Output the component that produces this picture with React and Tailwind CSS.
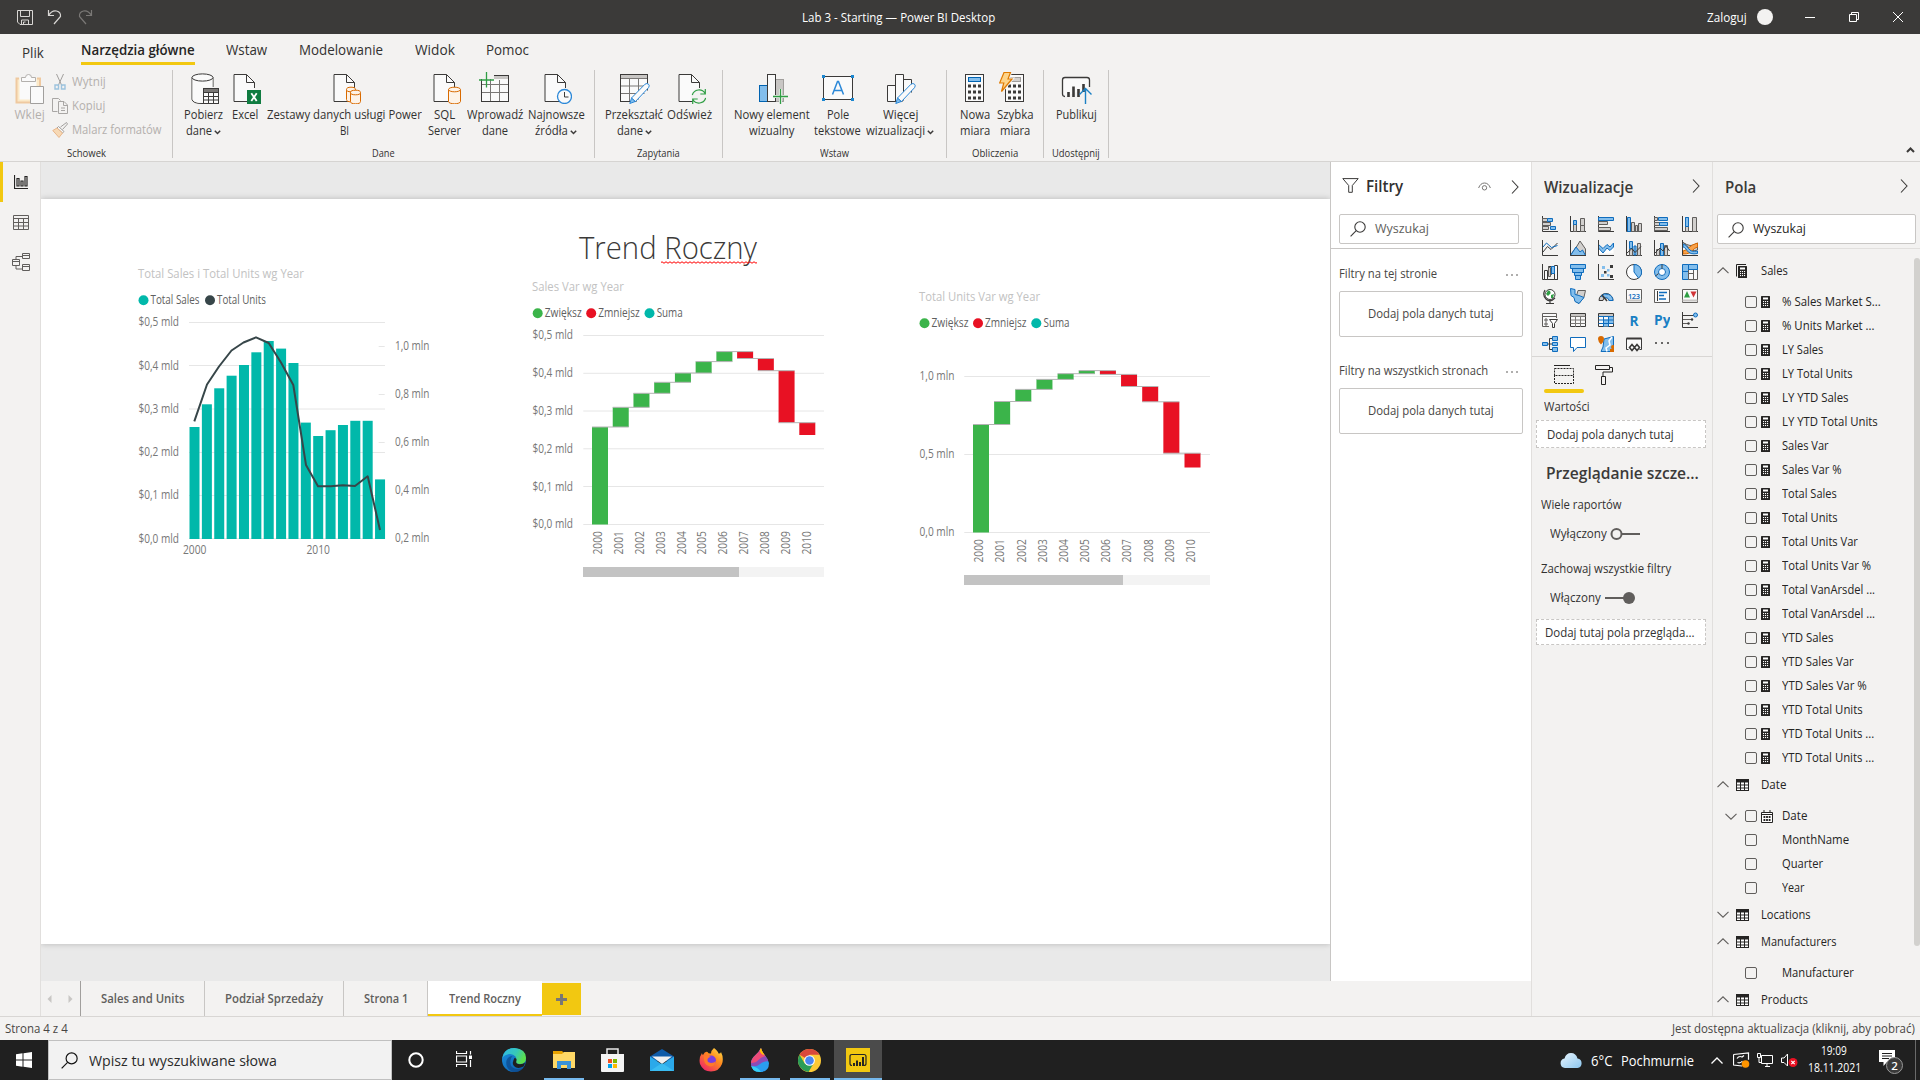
import React, { useLayoutEffect, useRef, useState } from "react";

const K = "#3b3a39";
const BLUE = "#0f6cbd";
const SKY = "#83beec";
const GRAY = "#c8c6c4";
const DG = "#797775";

/* Text condensed or widened so that it fills a given width. */
function T({ w, className = "", children }) {
  const ref = useRef(null);
  const [k, setK] = useState(1);
  useLayoutEffect(() => {
    setK(w / ref.current.offsetWidth);
  }, [w]);
  return (
    <span className={"inline-block whitespace-nowrap " + className} style={{ width: w + "px" }}>
      <span ref={ref} className="inline-block origin-left" style={{ transform: `scaleX(${k})` }}>
        {children}
      </span>
    </span>
  );
}

const Svg = ({ w = 16, h = w, vb, className = "", children }) => (
  <svg width={w} height={h} viewBox={vb || `0 0 ${w} ${h}`} fill="none" className={"block shrink-0 " + className}>
    {children}
  </svg>
);

/* ---------- shared small icons ---------- */
const Search = ({ s = 16, c = K }) => (
  <Svg w={s} vb="0 0 16 16">
    <circle cx="10" cy="6" r="5.2" stroke={c} strokeWidth="1.1" />
    <path d="M6.2 9.7 0.6 15.4" stroke={c} strokeWidth="1.1" />
  </Svg>
);
const ChevR = () => (
  <Svg w={8} h={16}>
    <path d="M1 1.5 7 8 1 14.5" stroke={K} strokeWidth="1.1" />
  </Svg>
);
const Chev = ({ up }) => (
  <Svg w={12} h={7}>
    <path d={up ? "M.5 6.2 6 .8 11.5 6.2" : "M.5 .8 6 6.2 11.5 .8"} stroke="#605e5c" strokeWidth="1.1" />
  </Svg>
);
const SmallDown = () => (
  <Svg w={7} h={5} className="ml-[2px] mt-[3px]">
    <path d="M.8 .8 3.5 3.5 6.2 .8" stroke={K} strokeWidth="1.5" />
  </Svg>
);

/* ---------- ribbon icons ---------- */
const Doc = () => (
  <>
    <path d="M5 2.5h13l7.5 7.5v19.500H5z" fill="#fafafa" />
    <path d="M20 29.500H5V2.500h12.500l8 8V16M17.500 2.500v8h8" stroke={K} />
  </>
);
const Cyl = ({ x, y, w, h, c = "#d86a00", f = "#fdf3e8" }) => {
  const r = w / 2;
  return (
    <g stroke={c} fill={f}>
      <path d={`M${x} ${y}v${h}a${r} 2.300 0 0 0 ${w} 0v${-h}`} />
      <ellipse cx={x + r} cy={y} rx={r} ry="2.300" />
    </g>
  );
};
const Pencil = () => (
  <g stroke="#2b88d8">
    <path d="M13.500 26 27 12.200q2-1.400 3.500 0t0 3.500L17.500 29.500z" fill="#fafafa" />
    <path d="M13.500 26.200 11.800 31.500 17.200 29.500z" fill={SKY} />
  </g>
);
const Keys = ({ x, y }) =>
  [0, 1, 2].map((r) => [0, 1, 2].map((c) => <rect key={r + "" + c} x={x + c * 5} y={y + r * 6} width="3" height="3" fill={K} />));

const ribbonIcons = {
  paste: (
    <>
      <path d="M5 6.500H2.500v24H26V6.500h-3" stroke="#efc9a0" strokeWidth="2" fill="#fbe9c8" />
      <path d="M5.500 6.500h17v21h-17z" fill="#fafafa" />
      <path d="M7.500 9.500v-4h4q0-3 3-3t3 3h4v4z" fill="#fafafa" stroke="#b3b0ad" />
      <path d="M16.500 14.500h13v17h-13z" fill="#fafafa" stroke="#a19f9d" />
    </>
  ),
  get: (
    <>
      <path d="M5 5.500v22q1 4 10 4h1M26 5.500V15" stroke={K} fill="none" />
      <path d="M5.500 6h20v9.500H16V31Q6 31 5.500 27z" fill="#fafafa" />
      <ellipse cx="15.500" cy="5.500" rx="10.500" ry="3.600" stroke={K} fill="#fafafa" />
      <rect x="16.500" y="16.500" width="15" height="15" fill="#fafafa" stroke={K} />
      <rect x="17" y="17" width="14" height="3" fill={DG} />
      <path d="M16.500 20.500h15M16.500 24.500h15M16.500 28h15M21.500 20v12M26.500 20v12" stroke={K} />
    </>
  ),
  excel: (
    <>
      <Doc />
      <rect x="18" y="18" width="14" height="14" fill="#107c41" />
      <path d="M22.300 21.200l5.400 7.800M27.700 21.200l-5.400 7.800" stroke="#fff" strokeWidth="1.800" />
    </>
  ),
  datasets: (
    <>
      <Doc />
      <Cyl x={17.500} y={17.500} w={9} h={10} />
      <Cyl x={21.500} y={20.500} w={10} h={9} />
    </>
  ),
  sql: (
    <>
      <Doc />
      <Cyl x={19.500} y={17.500} w={12} h={12} />
    </>
  ),
  enter: (
    <>
      <rect x="2.500" y="3.500" width="27" height="26" fill="#fafafa" stroke={K} />
      <rect x="12" y="4" width="17" height="3" fill={GRAY} />
      <path d="M3 12.500h26M3 20.500h26M11.500 4v25M20.500 8v21" stroke={DG} />
      <path d="M0 0h15v7H0z" fill="#f3f2f1" />
      <path d="M7.500 0v15.500M0 8h15" stroke="#2f9e44" strokeWidth="1.300" />
    </>
  ),
  recent: (
    <>
      <Doc />
      <circle cx="24.500" cy="24.500" r="7" fill="#fafafa" stroke="#2b88d8" strokeWidth="1.300" />
      <path d="M24.500 20v5h4" stroke={K} />
    </>
  ),
  transform: (
    <>
      <rect x="2.500" y="2.500" width="27" height="27" fill="#fafafa" stroke={K} />
      <rect x="3" y="3" width="26" height="3.500" fill={GRAY} />
      <path d="M3 6.500h26M3 14h26M3 21.500h26M11.500 7v22M20.500 7v22" stroke={DG} />
      <path d="M17 31 31 17v14z" fill="#f3f2f1" />
      <Pencil />
    </>
  ),
  refresh: (
    <>
      <Doc />
      <circle cx="25" cy="24.500" r="8" fill="#f3f2f1" />
      <path d="M18.300 23a7 7 0 0 1 12.800-1.500M31.700 26a7 7 0 0 1-12.800 1.500M31.300 17v5h-5M18.700 32v-5h5" stroke="#2f9e44" strokeWidth="1.200" />
    </>
  ),
  visual: (
    <>
      <rect x="3.500" y="13.500" width="8" height="16" fill={SKY} stroke="#0063b1" />
      <rect x="19.500" y="7.500" width="8" height="22" fill={GRAY} stroke="#a19f9d" />
      <rect x="11.500" y="2.500" width="8" height="27" fill="#fafafa" stroke={K} />
      <path d="M24.500 17v15M17 24.500h15" stroke="#f3f2f1" strokeWidth="3" />
      <path d="M24.500 17v15.500M17 24.500h15.500" stroke="#2f9e44" strokeWidth="1.300" />
    </>
  ),
  textbox: (
    <>
      <rect x="1.500" y="4.500" width="29" height="23" fill="#fafafa" stroke={K} />
      <path d="M10.500 22.500 15.500 9.500h1l5 13M12 18.500h8" stroke="#2b88d8" strokeWidth="1.500" />
      {[[0, 3], [29, 3], [0, 26], [29, 26]].map(([x, y]) => (
        <rect key={x + "-" + y} x={x} y={y} width="3" height="3" fill="#1a86d0" />
      ))}
    </>
  ),
  more: (
    <>
      <path d="M3.500 13.500h8v16h-8zM19.500 7.500h8v22h-8zM11.500 2.500h8v27h-8z" fill="#fafafa" stroke={K} />
      <path d="M17 31 31 17v14z" fill="#f3f2f1" />
      <Pencil />
    </>
  ),
  measure: (
    <>
      <rect x="6.500" y="2.500" width="18" height="27" fill="#fafafa" stroke={K} />
      <rect x="9.500" y="5.500" width="12" height="4" fill={SKY} stroke="#0063b1" />
      <Keys x={9} y={12.500} />
    </>
  ),
  quick: (
    <>
      <rect x="6.500" y="2.500" width="18" height="27" fill="#fafafa" stroke={K} />
      <rect x="11.500" y="5.500" width="10" height="4" fill="#d2d0ce" stroke="#a19f9d" />
      <Keys x={9} y={12.500} />
      <path d="M5 .5h6.500L9 7h4L2.500 19.500 4.800 11H.6z" fill="#fdd48a" stroke="#f3f2f1" strokeWidth="3" />
      <path d="M5 .5h6.500L9 7h4L2.500 19.500 4.800 11H.6z" fill="#fdd48a" stroke="#e07a00" strokeWidth="1.200" />
    </>
  ),
  publish: (
    <>
      <path d="M5 24.500q-2.500 0-2.500-2.500V8q0-2.500 2.500-2.500h22q2.500 0 2.500 2.500v7" stroke={K} strokeWidth="1.300" fill="#fafafa" />
      <path d="M8.500 20v5M13.500 14.500v10.500M18.500 17v8M23.500 12v8" stroke={K} strokeWidth="2.600" />
      <path d="M25.500 32V16M19.500 22.500l6-6 6 6" stroke="#1a80c4" strokeWidth="1.400" />
    </>
  ),
};

function RibbonButton({ icon, width, lines, drop }) {
  return (
    <div className={"flex flex-col items-center shrink-0 " + width}>
      <Svg w={32}>{ribbonIcons[icon]}</Svg>
      {lines.map(([t, w], i) => (
        <div key={t} className="flex h-4 items-center justify-center whitespace-nowrap leading-4 -mb-px mt-px first-of-type:mt-[3px]">
          <T w={w}>{t}</T>
          {drop && i === lines.length - 1 && <SmallDown />}
        </div>
      ))}
    </div>
  );
}

function Group({ label, lw, width, pad = "", children }) {
  return (
    <div className={"flex h-[88px] shrink-0 flex-col justify-between border-r border-[#c8c6c4] " + width}>
      <div className={"mt-[2px] flex " + pad}>{children}</div>
      <div className="flex h-[11px] items-center justify-center text-[10px] leading-none">
        <T w={lw}>{label}</T>
      </div>
    </div>
  );
}

function TitleBar() {
  return (
    <div className="flex h-[34px] shrink-0 items-center bg-[#3b3a39] text-[12px] text-white">
      <div className="flex w-[802px] items-center gap-[14px] pl-[17px]">
        <Svg w={16}>
          <path d="M.5 1.500h15v14H3L.5 13zM3.500 1.500v6h9v-6M4.500 15.500v-4.500h7v4.500M6.500 15v-2h2" stroke="#d8d6d4" />
        </Svg>
        <Svg w={15} h={16}>
          <path d="M1.500 1v5.500H7M1.500 6.500Q5 1 9.500 2T13.500 7.500L7 15" stroke="#d8d6d4" strokeWidth="1.200" />
        </Svg>
        <Svg w={15} h={16} className="ml-[2px]">
          <path d="M13.500 1v5.500H8M13.500 6.500Q10 1 5.500 2T1.500 7.500L8 15" stroke="#7a7876" strokeWidth="1.200" />
        </Svg>
      </div>
      <T w={193} className="mt-[2px]">Lab 3 - Starting — Power BI Desktop</T>
      <div className="ml-auto flex items-center">
        <T w={40} className="mt-px">Zaloguj</T>
        <span className="ml-[10px] h-4 w-4 rounded-full bg-[#f3f2f1]" />
        <Svg w={10} h={10} className="ml-8"><path d="M0 5.500h10" stroke="#fff" /></Svg>
        <Svg w={10} h={10} className="ml-[34px]"><path d="M.5 2.500h7v7h-7zM2.500 2.500V.5h7v7h-2" stroke="#fff" /></Svg>
        <Svg w={10} h={10} className="ml-[34px] mr-[17px]"><path d="M0 0 10 10M10 0 0 10" stroke="#fff" /></Svg>
      </div>
    </div>
  );
}

function Ribbon() {
  return (
    <div className="flex h-[128px] shrink-0 flex-col border-b border-[#d6d4d2] bg-[#f3f2f1] text-[12px] text-[#323130]">
      <div className="flex h-9 items-start pl-[22px] pt-[6px] text-[14px] leading-5">
        <T w={22} className="mt-[3px]">Plik</T>
        <div className="ml-[37px] h-[25px] border-b-[3px] border-[#f2c811] font-semibold text-[#252423]">
          <T w={114}>Narzędzia główne</T>
        </div>
        <T w={41} className="ml-[31px]">Wstaw</T>
        <T w={84} className="ml-8">Modelowanie</T>
        <T w={40} className="ml-8">Widok</T>
        <T w={43} className="ml-[31px]">Pomoc</T>
      </div>
      <div className="flex">
        <Group label="Schowek" lw={39} width="w-[173px]" pad="text-[#b3b0ad]">
          <div className="flex w-[52px] flex-col items-center pr-px pl-2">
            <Svg w={32}>{ribbonIcons.paste}</Svg>
            <div className="mt-[3px] leading-4"><T w={30}>Wklej</T></div>
          </div>
          <div className="mt-[-2px] flex flex-col">
            <div className="flex h-6 items-center gap-[4px]">
              <Svg w={16}>
                <path d="M4.500 0 10 12M11.500 0 6 12" stroke="#a19f9d" />
                <path d="M3 11h3.500v4H3zM9.500 11H13v4H9.500z" stroke="#9cc3de" strokeWidth="1.400" />
              </Svg>
              <T w={34}>Wytnij</T>
            </div>
            <div className="flex h-6 items-center gap-[4px]">
              <Svg w={16}>
                <path d="M5.500 13.500H.5v-13h6l2 2M6.500 3.500h5.500l3.500 3.500v8.500h-9zM11.500 3.500V7.500h4M9 10h4M9 12.500h4" stroke="#a8a6a4" />
              </Svg>
              <T w={33}>Kopiuj</T>
            </div>
            <div className="flex h-6 items-center gap-[4px]">
              <Svg w={16}>
                <path d="M8.500 5 14.500.5l1 1.500-5 5.500" stroke="#a19f9d" />
                <path d="M6.500 4.500 12 9.500l-1.500 1.500L5 6z" fill="#fafafa" stroke="#a19f9d" />
                <path d="M5 6 .8 8.500 7 15.500 10.500 11z" fill="#f7d9b5" stroke="#e8b68a" />
              </Svg>
              <T w={90}>Malarz formatów</T>
            </div>
          </div>
        </Group>
        <Group label="Dane" lw={23} width="w-[422px]" pad="pl-2">
          <RibbonButton icon="get" width="w-[44px]" lines={[["Pobierz", 39], ["dane", 26]]} drop />
          <RibbonButton icon="excel" width="w-[40px]" lines={[["Excel", 26]]} />
          <RibbonButton icon="datasets" width="w-[159px]" lines={[["Zestawy danych usługi Power", 155], ["BI", 9]]} />
          <RibbonButton icon="sql" width="w-[41px]" lines={[["SQL", 21], ["Server", 33]]} />
          <RibbonButton icon="enter" width="w-[60px]" lines={[["Wprowadź", 56], ["dane", 26]]} />
          <RibbonButton icon="recent" width="w-[62px]" lines={[["Najnowsze", 57], ["źródła", 33]]} drop />
        </Group>
        <Group label="Zapytania" lw={43} width="w-[128px]" pad="pl-[9px]">
          <RibbonButton icon="transform" width="w-[60px]" lines={[["Przekształć", 58], ["dane", 26]]} drop />
          <RibbonButton icon="refresh" width="w-[51px]" lines={[["Odśwież", 45]]} />
        </Group>
        <Group label="Wstaw" lw={29} width="w-[224px]" pad="pl-2">
          <RibbonButton icon="visual" width="w-[81px]" lines={[["Nowy element", 76], ["wizualny", 45]]} />
          <RibbonButton icon="textbox" width="w-[51px]" lines={[["Pole", 22], ["tekstowe", 47]]} />
          <RibbonButton icon="more" width="w-[74px]" lines={[["Więcej", 35], ["wizualizacji", 59]]} drop />
        </Group>
        <Group label="Obliczenia" lw={46} width="w-[97px]" pad="pl-[10px]">
          <RibbonButton icon="measure" width="w-[36px]" lines={[["Nowa", 30], ["miara", 30]]} />
          <RibbonButton icon="quick" width="w-[44px]" lines={[["Szybka", 37], ["miara", 30]]} />
        </Group>
        <Group label="Udostępnij" lw={48} width="w-[65px]">
          <RibbonButton icon="publish" width="w-[64px]" lines={[["Publikuj", 41]]} />
        </Group>
        <Svg w={9} h={6} className="ml-auto mr-[5px] mt-[77px]">
          <path d="M1 5 4.500 1.500 8 5" stroke={K} strokeWidth="2" />
        </Svg>
      </div>
    </div>
  );
}

function Rail() {
  return (
    <div className="flex w-[41px] shrink-0 flex-col border-r border-[#e1dfdd] bg-[#f3f2f1]">
      <div className="flex h-10 items-center border-l-[3px] border-[#f2c811] pl-[11px]">
        <Svg w={14} h={14}>
          <path d="M.5 0v13.500H14M3 3.500h2v7.500H3zM7 6h2v5H7zM11 1.500h2V11h-2z" stroke="#252423" strokeWidth="1.200" />
        </Svg>
      </div>
      <div className="flex h-10 items-center pl-[13px]">
        <Svg w={16} h={15}>
          <path d="M.5.5h15v14H.5zM.5 3.500h15M.5 7.500h15M.5 11h15M5.500 3.500v11M10.500 3.500v11" stroke="#605e5c" />
        </Svg>
      </div>
      <div className="flex h-10 items-center pl-3">
        <Svg w={18} h={18}>
          <path d="M.5 6.500h7v6h-7zM.5 8.500h7M10.500.5h7v5h-7zM10.500 2.500h7M10.500 11.500h7v6h-7zM10.500 13.500h7M4 6.500v-3h6.500M4 12.500v3.500h6.500" stroke="#605e5c" />
        </Svg>
      </div>
    </div>
  );
}

/* ---------- charts ---------- */
const AX = "#777777";
const Label = ({ x, y, w, children, fill = AX, size = 12 }) => (
  <text x={x} y={y} fontSize={size} fill={fill} textLength={w} lengthAdjust="spacingAndGlyphs">{children}</text>
);
const Grid = ({ x1, x2, ys }) => ys.map((y) => <path key={y} d={`M${x1} ${y}H${x2}`} stroke="#e6e6e6" />);

function ComboChart() {
  const tops = [427, 404.3, 388.3, 375.7, 365, 352.3, 341, 348.6, 363, 422.6, 436, 430.2, 425, 420.8, 420.8, 479.4];
  return (
    <svg width="320" height="300" viewBox="130 262 320 300" className="absolute left-[89px] top-[63px] overflow-visible">
      <Label x={138} y={278.300} w={166} fill="#c2c2c2">Total Sales i Total Units wg Year</Label>
      <circle cx="143.500" cy="300.200" r="5" fill="#01b8aa" />
      <Label x={150.500} y={304.300} w={49} fill="#5f5f5f">Total Sales</Label>
      <circle cx="210" cy="300.200" r="5" fill="#374649" />
      <Label x={217} y={304.300} w={49} fill="#5f5f5f">Total Units</Label>
      <Grid x1={189} x2={385} ys={[322.500, 365.500, 409, 452.500, 495.500, 538.500]} />
      {["0,5", "0,4", "0,3", "0,2", "0,1", "0,0"].map((t, i) => (
        <Label key={t} x={138.500} y={326.300 + i * 43.250} w={40.500}>{`$${t} mld`}</Label>
      ))}
      <path d="M374 325h11v110h-11z" fill="#fff" />
      {["1,0", "0,8", "0,6", "0,4", "0,2"].map((t, i) => (
        <g key={t}>
          <path d={`M378.700 ${346.500 + i * 48}h6`} stroke="#e6e6e6" />
          <Label x={395} y={350.300 + i * 48} w={34.500}>{`${t} mln`}</Label>
        </g>
      ))}
      <path d="M374 365.500h11M374 409h11" stroke="#e6e6e6" />
      {tops.map((y, i) => (
        <rect key={i} x={189.500 + i * 12.370} y={y} width="10" height={539 - y} fill="#01b8aa" />
      ))}
      <path
        d="M194.300 421.300 207 384.500 219 366.500 231.500 350.500 243.500 342.500 256 337.300 268.700 343 281 362.500 293.300 385 306 465 318 486.200 330.500 486.300 343 485.300 355 486 367.700 476.300 380 530"
        stroke="#374649" strokeWidth="2" fill="none" strokeLinejoin="round"
      />
      <Label x={183} y={554.300} w={23.500}>2000</Label>
      <Label x={306.500} y={554.300} w={23.500}>2010</Label>
    </svg>
  );
}

function Legend({ x, y }) {
  return (
    <>
      <circle cx={x + 5} cy={y} r="5" fill="#3bb44a" />
      <Label x={x + 12} y={y + 4.100} w={37} fill="#5f5f5f">Zwiększ</Label>
      <circle cx={x + 58.500} cy={y} r="5" fill="#e81123" />
      <Label x={x + 65.500} y={y + 4.100} w={41.500} fill="#5f5f5f">Zmniejsz</Label>
      <circle cx={x + 116.800} cy={y} r="5" fill="#01b8aa" />
      <Label x={x + 124} y={y + 4.100} w={26} fill="#5f5f5f">Suma</Label>
    </>
  );
}

function Waterfall({ x0, step, bars, yearX, yearStep, yearY }) {
  return (
    <>
      {bars.map(([t, b, red], i) => (
        <rect key={i} x={x0 + i * step} y={t} width="16" height={b - t} fill={red ? "#e81123" : "#3bb44a"} />
      ))}
      {bars.slice(0, -1).map(([t, b, red], i) => (
        <path key={i} d={`M${x0 + i * step} ${red ? b : t}H${x0 + (i + 1) * step + 16}`} stroke="#b3b3b3" />
      ))}
      {bars.map((_, i) => (
        <text key={i} transform={`translate(${yearX + i * yearStep + 4} ${yearY}) rotate(-90)`} fontSize="12" fill={AX} textLength="23.5" lengthAdjust="spacingAndGlyphs">
          {2000 + i}
        </text>
      ))}
    </>
  );
}

function SalesVar() {
  const bars = [[427, 524.500], [407.300, 427], [393.300, 407.300], [382.300, 393.300], [373, 382.300], [361.600, 373], [351.600, 361.600], [351.600, 358.500, 1], [358.500, 370.700, 1], [370.700, 422.700, 1], [422.700, 435, 1]];
  return (
    <svg width="320" height="310" viewBox="520 275 320 310" className="absolute left-[479px] top-[76px] overflow-visible">
      <Label x={532} y={291.200} w={92} fill="#c2c2c2">Sales Var wg Year</Label>
      <Legend x={532.700} y={313.200} />
      <Grid x1={583.300} x2={824} ys={[335.500, 373.300, 411, 448.800, 486.500, 524.500]} />
      {["0,5", "0,4", "0,3", "0,2", "0,1", "0,0"].map((t, i) => (
        <Label key={t} x={532.500} y={339.200 + i * 37.830} w={40.500}>{`$${t} mld`}</Label>
      ))}
      <Waterfall x0={592} step={20.730} bars={bars} yearX={598.300} yearStep={20.820} yearY={554.500} />
      <rect x="583" y="567" width="241" height="10" fill="#f3f3f3" />
      <rect x="583" y="567" width="156" height="10" fill="#c3c3c3" />
    </svg>
  );
}

function UnitsVar() {
  const bars = [[424.500, 532.500], [401.500, 424.500], [389.400, 401.500], [379.400, 389.400], [373.700, 379.400], [370.600, 374], [370.600, 374.400, 1], [374.400, 386.500, 1], [386.500, 401.800, 1], [401.800, 453.200, 1], [453.200, 467.500, 1]];
  return (
    <svg width="320" height="310" viewBox="910 285 320 310" className="absolute left-[869px] top-[86px] overflow-visible">
      <Label x={919} y={301.200} w={121} fill="#c2c2c2">Total Units Var wg Year</Label>
      <Legend x={919.500} y={323.300} />
      <Grid x1={964.300} x2={1210} ys={[376.500, 454.500, 532.500]} />
      {["1,0", "0,5", "0,0"].map((t, i) => (
        <Label key={t} x={919.500} y={380.300 + i * 78} w={35}>{`${t} mln`}</Label>
      ))}
      <Waterfall x0={973} step={21.150} bars={bars} yearX={979.300} yearStep={21.170} yearY={562.500} />
      <rect x="964" y="575" width="246" height="10" fill="#f3f3f3" />
      <rect x="964" y="575" width="159" height="10" fill="#c3c3c3" />
    </svg>
  );
}

function Canvas() {
  return (
    <div className="flex h-[819px] flex-col bg-[#e9e9e9] pt-[37px]">
      <div className="relative h-[745px] bg-white shadow-[0_0_6px_rgba(0,0,0,0.22)]">
        <svg width="190" height="40" viewBox="574 230 190 40" className="absolute left-[533px] top-[31px] overflow-visible">
          <text x="579" y="259" fontSize="32" fontWeight="300" fill="#3b3a39" textLength="178" lengthAdjust="spacingAndGlyphs">Trend Roczny</text>
          <path d={"M661 262.500" + "q1 -1.500 2 0t2 0".repeat(24)} stroke="#f00" fill="none" />
        </svg>
        <ComboChart />
        <SalesVar />
        <UnitsVar />
      </div>
    </div>
  );
}

const FilterCard = ({ label, w, cls }) => (
  <div className={cls}>
    <div className="flex h-4 items-center justify-between pr-[13px]">
      <T w={w}>{label}</T>
      <Svg w={12} h={3}><path d="M0 2h2M5 2h2M10 2h2" stroke="#605e5c" strokeWidth="1.200" /></Svg>
    </div>
    <div className="mt-[9px] flex h-[46px] w-[184px] items-center justify-center rounded-[2px] border border-[#c8c6c4] bg-white">
      <T w={126}>Dodaj pola danych tutaj</T>
    </div>
  </div>
);

function Filters() {
  return (
    <div className="flex h-[819px] w-[201px] shrink-0 flex-col border-l border-[#c8c6c4] bg-white text-[12px] text-[#484644]">
      <div className="flex h-[52px] items-center pl-[11px] pr-3 pb-[5px]">
        <Svg w={17} h={15}><path d="M.8.6h15.400L10.300 7.500v6.800H6.700V7.500z" stroke={K} /></Svg>
        <T w={37} className="ml-[7px] text-[16px] font-semibold text-[#323130]">Filtry</T>
        <Svg w={13} h={9} className="ml-auto mt-[2px]">
          <path d="M.6 6Q2.500 1 6.500 1t5.900 5" stroke={DG} />
          <circle cx="6.500" cy="5.800" r="2.200" stroke={DG} />
        </Svg>
        <div className="ml-5 mt-[3px]"><ChevR /></div>
      </div>
      <div className="ml-2 flex h-[30px] w-[180px] items-center gap-[9px] rounded-[2px] border border-[#c8c6c4] pl-[10px]">
        <Search s={16} />
        <T w={54} className="text-[12.5px] text-[#605e5c]">Wyszukaj</T>
      </div>
      <div className="mt-1 h-px bg-[#c8c6c4]" />
      <FilterCard cls="ml-2 mt-[17px]" label="Filtry na tej stronie" w={98} />
      <FilterCard cls="ml-2 mt-[26px]" label="Filtry na wszystkich stronach" w={149} />
    </div>
  );
}

/* ---------- visualization gallery ---------- */
const Axis = () => <path d="M.5 0v15.500H16" stroke={K} />;
const b = { fill: SKY, stroke: BLUE };
const g = { fill: "#d2d0ce", stroke: "#605e5c" };
const vizIcons = [
  <><Axis /><path d="M.5 2.500h5v3h-5zM.5 6.500h8v3h-8zM.5 10.500h6v3H.5z" {...g} /><path d="M5.500 2.500h5v3h-5zM8.500 10.500h5v3h-5z" {...b} /></>,
  <><Axis /><path d="M3.500 7.500h3v8h-3zM10.500 9.500h4v6h-4zM10.500 2.500h4v7h-4z" {...g} /><path d="M3.500 4.500h3v4h-3z" {...b} /></>,
  <><Axis /><path d="M.5 5.500h9v3h-9zM.5 11.500h12v3H.5z" {...g} /><path d="M.5 1.500h15v3H.5z" {...b} /></>,
  <><Axis /><path d="M5.500 6.500h3v9h-3zM9.500 9.500h2v6h-2zM12.500 7.500h3v8h-3z" {...g} /><path d="M1.500 1.500h3v14h-3z" {...b} /></>,
  <><Axis /><path d="M.5 6.500h13v3H.5zM.5 11.500h13v3H.5z" {...g} /><path d="M.5 1.500h3v3h-3z" {...g} /><path d="M4.500 1.500h9v3h-9zM5.500 6.500h8v3h-8z" {...b} /></>,
  <><Axis /><path d="M3.500 1.500h3v14h-3zM10.500 1.500h4v14h-4z" {...g} /><path d="M3.500 1.500h3v9h-3z" {...b} /></>,
  <><Axis /><path d="M1 12 5.500 6.500 9 9.500 15.500 3" stroke={K} /><path d="M1 7 4.500 3 9.500 7.500 15.500 5.500" stroke={BLUE} /></>,
  <><path d="M.5 15 7 6l3-5 5.500 8v6z" {...g} /><path d="M.5 15.500 6 7l4 5 2.500-2 3 5.500z" {...b} /><path d="M.5 0v15.500H16" stroke={K} /></>,
  <><path d="M1 13.500v-9L5.500 9 9.500 5.500 12 7l3.500-3v9.500z" fill="#fff" /><path d="M.5 4.500 5 8.500 9 4.500 12 7l3.500-4v4L12 10.500 9 8l-4 5L.5 8z" {...b} /><Axis /></>,
  <><Axis /><path d="M3.500 8.500h3v7h-3zM11.500 3.500h3v12h-3z" {...g} /><path d="M3.500 1.500h3v7h-3zM8 6h2v9H8z" {...b} /><path d="M1 13 6 8.500l3 4 6-6" stroke={K} /></>,
  <><Axis /><path d="M2.500 9.500h3v6h-3zM10.500 5.500h3v10h-3z" {...g} /><path d="M6.500 3.500h3v12h-3z" {...b} /><path d="M1 13 6 8l3 3 3-5 3.500 5" stroke={K} /></>,
  <><path d="M1 2.500Q4 4 7 8t8.500 2V3Q11 6 8 5.500T1 2.500z" {...g} /><path d="M1 11q3-.5 6-3.500t8.500-4.500v4Q12 8 10 11t-9 3z" fill="#f7a14a" stroke="#d86a00" /><path d="M1 4Q4 4.500 6.500 8.500T15.500 11v2.500Q8 15 5 10.500T1 7z" {...b} /><path d="M.5 0v15.500H16" stroke={K} /></>,
  <><Axis /><path d="M2.500 6.500h3v9h-3zM6.500 2.500h3v8h-3zM12.500 1.500h3v14h-3z" fill="#fafafa" stroke={K} /><path d="M6.500 3.500h2v9h-2z" {...g} /><path d="M9.500 2.500h3v7h-3z" {...b} /></>,
  <path d="M.5.500h15v4H.5zM2.500 4.500h11v4h-11zM4.500 8.500h7v3h-7zM5.500 11.500h5v4h-5z" {...b} />,
  <><Axis /><g fill={K}><rect x="12" y="1" width="3" height="3" /><rect x="12" y="11" width="3" height="3" /><rect x="6" y="7" width="2.500" height="2.500" /></g><g fill={SKY}><rect x="4" y="2" width="3" height="3" /><rect x="3" y="10" width="3" height="3" /><rect x="9" y="10" width="2.500" height="2.500" /><rect x="9" y="5" width="2.500" height="2.500" /></g></>,
  <><circle cx="8" cy="8" r="7.500" fill="#fff" stroke={K} /><path d="M8 8V.5a7.500 7.500 0 0 1 4.500 13.500z" {...b} /></>,
  <><circle cx="8" cy="8" r="5.500" stroke={SKY} strokeWidth="4" /><circle cx="8" cy="8" r="7.500" stroke={BLUE} /><circle cx="8" cy="8" r="3.500" fill="#fff" stroke={BLUE} /><path d="M8 .5v4M4.500 9.500 1.500 12" stroke={K} /></>,
  <><path d="M.5.500h6v15h-6z" {...b} /><path d="M.5 7.500h6" stroke={BLUE} /><path d="M6.500 5.500h9v10h-9z" fill="#fafafa" stroke="#605e5c" /><path d="M6.500.500h9v5h-9z" {...b} /><path d="M11.500 6v9M6.500 9.500h5" stroke="#605e5c" /></>,
  <><circle cx="8" cy="6.500" r="5" fill="#fff" stroke={K} /><path d="M6 2.500q3 0 2.500 3L6 8 4 6zM9 7l3-1-1 4-2 0z" fill="#2f9e44" /><path d="M3 2Q0 7 4 11t9-1M8 12v3M4 15.500h8" stroke={K} strokeWidth="1.200" /></>,
  <><path d="M8 2.500h7.500L14 9l-5 6.500L5 13z" {...g} /><path d="M.5.500 5 1.500v5l4 1 5 2-5 6-4-2-1-4-3-2z" {...b} /></>,
  <><path d="M1 12.500a7 7 0 0 1 14 0h-4a3 3 0 0 0-6 0z" fill="#d2d0ce" stroke={K} /><path d="M3 8a7 7 0 0 1 12 4.500h-4a3 3 0 0 0-4-2.500z" {...b} /><path d="M4 7 9 13" stroke={K} strokeWidth="1.500" /></>,
  <><path d="M.5 1.500h15v13H.5z" fill="#fafafa" stroke="#605e5c" /><path d="M.5 12.500h15" stroke={GRAY} strokeWidth="2" /><text x="2" y="11" fontSize="7.500" fontWeight="600" fill={BLUE} textLength="12">123</text></>,
  <><path d="M.5 1.500h15v13H.5z" fill="#fafafa" stroke="#605e5c" /><path d="M3.500 3v10" stroke={K} /><path d="M5 4.500h8M5 7.500h5M5 11h7" stroke={BLUE} strokeWidth="1.600" /></>,
  <><path d="M.5 1.500h15v13H.5z" fill="#fafafa" stroke="#605e5c" /><path d="M.5 12.500h15" stroke={GRAY} strokeWidth="2" /><path d="M2 9.500 5 3l3 6.500z" fill="#2f9e44" /><path d="M8.500 3.500h6l-3 6z" fill="#d13438" /></>,
  <><path d="M7 14.500H.5v-13h14V6M.5 4.500h14" fill="#fafafa" stroke="#605e5c" /><path d="M3 7h2v2H3zM3 11h2v2H3z" stroke="#605e5c" /><path d="M7.500 7.500h8l-3 4v4h-2v-4z" fill="#fff" stroke={K} /></>,
  <><path d="M.5 1.500h15v13H.5z" fill="#fafafa" stroke={K} /><path d="M1 2h14v2H1z" fill={GRAY} /><path d="M.5 4.500h15M.5 8h15M.5 11.500h15M5.500 4v11M10.500 4v11" stroke={DG} /></>,
  <><path d="M.5 1.500h15v13H.5z" fill="#fafafa" stroke={K} /><path d="M1 2h14v2.500H1z" fill={GRAY} /><path d="M10.500 4.500h5v7h-10v-4h5zM5.500 11.500h5v3h-5z" fill={SKY} /><path d="M.5 4.500h15M.5 8h15M.5 11.500h15M5.500 4v11M10.500 4v11" stroke={BLUE} /></>,
  <text x="3.500" y="14" fontSize="15" fontWeight="700" fill="#1a80c4" textLength="9" lengthAdjust="spacingAndGlyphs">R</text>,
  <text x="0" y="13" fontSize="14" fontWeight="700" fill="#1a80c4" textLength="16.500" lengthAdjust="spacingAndGlyphs">Py</text>,
  <><Axis /><path d="M1 3.500h11" stroke={K} /><circle cx="13.500" cy="3" r="2" {...b} /><path d="M1 7.500h8M1 11.500h5" stroke="#605e5c" /><circle cx="10" cy="7.500" r="1.200" fill={K} /><circle cx="6.500" cy="11.500" r="1.200" fill={K} /></>,
  <><path d="M5 8h5M10 2.500H7.500v11H10" stroke={K} /><path d="M.5 6.500h5v3h-5zM10.500.500h5v4h-5zM10.500 6.500h5v3h-5zM10.500 11.500h5v4h-5z" {...b} /></>,
  <path d="M.5 1.500h15v10H7l-3.500 4v-4h-3z" fill="#fff" stroke={BLUE} />,
  <><path d="M3 15.500 5 11l1-8 9.500-2.500v15z" {...b} /><path d="M9 15.500 8 12l4-3-1-4 3-4" stroke="#fff" strokeWidth="1.500" /><path d="M3 8.500Q0 5.500 0 3a3 3 0 0 1 6 0q0 2.500-3 5.500zM15 14q-2-1-2-3t2-2 2 2-2 3z" fill="#d86a00" /><rect x="12" y="13" width="4" height="3" fill="#d86a00" /></>,
  <><path d="M2.500 13.500h-2v-11h15v11h-2" fill="#fafafa" stroke={K} /><path d="M.5 2.500h15" stroke={K} strokeWidth="2" /><path d="m6 8.500 2.500 3L6 14.500l-2.500-3zM11 8.500l2.500 3-2.500 3-2.500-3z" stroke={K} strokeWidth="1.600" /></>,
  <path d="M1 7h2M7 7h2M13 7h2" stroke={K} strokeWidth="1.400" />,
];

function Visualizations() {
  return (
    <div className="flex w-[181px] shrink-0 flex-col border-l border-[#e1dfdd] bg-[#f3f2f1] text-[12px] text-[#323130]">
      <div className="flex h-[50px] items-center justify-between pl-3 pr-[11px]">
        <T w={89} className="text-[16px] font-semibold text-[#3b3a39]">Wizualizacje</T>
        <div className="mt-[-2px] pr-[1px]"><ChevR /></div>
      </div>
      <div className="ml-[10px] mt-1 grid w-[168px] grid-cols-6 gap-y-2">
        {vizIcons.map((ic, i) => <Svg key={i} w={16}>{ic}</Svg>)}
      </div>
      <div className="mt-1 h-px bg-[#d8d6d4]" />
      <div className="ml-3 mt-2 flex items-start">
        <div className="w-10">
          <Svg w={20} h={20} className="mx-auto">
            <path d="M0 .5h16" stroke="#252423" />
            <path d="M.5 3.500h19v7H.5zM.5 10v8.500h19V10" stroke="#252423" strokeDasharray="2 1" />
          </Svg>
          <div className="mt-[4px] h-[4px] rounded-full bg-[#f2c811]" />
        </div>
        <Svg w={18} h={20} className="ml-[11px]">
          <path d="M.5.500h14v4H.5zM14.500 2.500h3v4.500h-9.500V11M6.500 11.500h4v8h-4z" stroke="#252423" />
        </Svg>
      </div>
      <div className="ml-3 mt-[6px] h-4 leading-4"><T w={46}>Wartości</T></div>
      <div className="ml-1 mt-[5px] flex h-7 w-[170px] items-center border border-dashed border-[#c8c6c4] bg-white pl-[10px] pt-px">
        <T w={127}>Dodaj pola danych tutaj</T>
      </div>
      <div className="ml-[14px] mt-[15px] h-5 text-[16px] font-semibold leading-5 text-[#3b3a39]"><T w={153}>Przeglądanie szcze...</T></div>
      <div className="ml-[9px] mt-[14px] h-4 leading-4"><T w={81}>Wiele raportów</T></div>
      <div className="ml-[18px] mt-[13px] flex h-4 items-center gap-[3px]">
        <T w={57}>Wyłączony</T>
        <Svg w={32} h={12}><path d="M12 6h18" stroke="#605e5c" strokeWidth="2" /><circle cx="6.500" cy="6" r="5" stroke="#605e5c" strokeWidth="2" /></Svg>
      </div>
      <div className="ml-[9px] mt-[19px] h-4 leading-4"><T w={130}>Zachowaj wszystkie filtry</T></div>
      <div className="ml-[18px] mt-[13px] flex h-4 items-center gap-[4px]">
        <T w={51}>Włączony</T>
        <Svg w={32} h={12}><path d="M0 6h19" stroke="#605e5c" strokeWidth="2" /><circle cx="24" cy="6" r="6" fill="#605e5c" /></Svg>
      </div>
      <div className="ml-1 mt-[13px] flex h-[26px] w-[170px] items-center border border-dashed border-[#c8c6c4] bg-white pl-2 pt-px">
        <T w={149}>Dodaj tutaj pola przegląda...</T>
      </div>
    </div>
  );
}

/* ---------- fields ---------- */
const Calc = ({ stacked }) => (
  <Svg w={stacked ? 12 : 9} h={stacked ? 14 : 12} vb={stacked ? "-2 -2 12 14" : "0 0 9 12"}>
    {stacked && <path d="M-1.500 10.500v-12H8" stroke="#252423" />}
    <rect width="9" height="12" rx=".5" fill="#252423" />
    <rect x="2" y="1.500" width="5" height="2" fill="#fff" />
    {[5, 7, 9].map((y) => [2, 4, 6].map((x) => <rect key={x + "" + y} x={x} y={y} width="1.100" height="1.100" fill="#fff" />))}
  </Svg>
);
const Table = () => (
  <Svg w={13} h={12}>
    <path d="M0 0h13v12H0z" fill="#252423" />
    <path d="M1 3.500h3v2H1zM5 3.500h3v2H5zM9 3.500h3v2H9zM1 6.500h3v2H1zM5 6.500h3v2H5zM9 6.500h3v2H9zM1 9.500h3V11H1zM5 9.500h3V11H5zM9 9.500h3V11H9z" fill="#fff" />
  </Svg>
);
const Calendar = () => (
  <Svg w={12} h={13}>
    <path d="M.5 2.500h11v10H.5z" fill="#fff" stroke="#252423" />
    <path d="M0 4.500h12M3 0v3M9 0v3" stroke="#252423" />
    <path d="M2.500 7h7M2.500 10h7" stroke="#252423" strokeWidth="1.800" strokeDasharray="1.800 .8" />
  </Svg>
);

const measures = [
  ["% Sales Market S...", 99], ["% Units Market ...", 93], ["LY Sales", 41.500], ["LY Total Units", 70.500], ["LY YTD Sales", 66.500],
  ["LY YTD Total Units", 95.500], ["Sales Var", 47], ["Sales Var %", 60], ["Total Sales", 55], ["Total Units", 55.500],
  ["Total Units Var", 76], ["Total Units Var %", 89], ["Total VanArsdel ...", 93], ["Total VanArsdel ...", 93], ["YTD Sales", 51.500],
  ["YTD Sales Var", 72], ["YTD Sales Var %", 85], ["YTD Total Units", 80.500], ["YTD Total Units ...", 92.500], ["YTD Total Units ...", 92.500],
];

function FieldRow({ name, w, icon, chev }) {
  return (
    <div className="flex h-6 items-center">
      <div className="w-[32px] pl-[12px]">{chev && <Chev />}</div>
      <span className="h-3 w-3 rounded-[2px] border border-[#605e5c]" />
      <div className="flex w-[25px] pl-[4px]">{icon}</div>
      <T w={w}>{name}</T>
    </div>
  );
}
function FieldHead({ name, w, open, icon }) {
  return (
    <div className="flex h-[27px] items-center pl-[4px]">
      <Chev up={open} />
      <div className="ml-[7px] flex w-[25px] pt-px">{icon}</div>
      <T w={w}>{name}</T>
    </div>
  );
}

function Fields() {
  return (
    <div className="flex w-[208px] shrink-0 flex-col overflow-hidden border-l border-[#e1dfdd] bg-[#f3f2f1] text-[12px] text-[#252423]">
      <div className="flex h-[50px] items-center justify-between pl-3 pr-[12px]">
        <T w={31} className="text-[16px] font-semibold text-[#3b3a39]">Pola</T>
        <div className="mt-[-2px]"><ChevR /></div>
      </div>
      <div className="ml-1 mt-[2px] flex h-[30px] w-[199px] shrink-0 items-center gap-[9px] rounded-[2px] border border-[#c8c6c4] bg-white pl-[10px] pt-px">
        <Search s={16} />
        <T w={53} className="text-[12.5px]">Wyszukaj</T>
      </div>
      <div className="mt-1 h-px shrink-0 bg-[#e1dfdd]" />
      <div className="flex flex-1 justify-between overflow-hidden pt-[8px]">
        <div>
          <FieldHead name="Sales" w={27} open icon={<Calc stacked />} />
          <div className="pb-[1px] pt-[6px]">
            {measures.map(([n, w], i) => <FieldRow key={i} name={n} w={w} icon={<Calc />} />)}
          </div>
          <FieldHead name="Date" w={25} open icon={<Table />} />
          <div className="pb-[1px] pt-[6px]">
            <FieldRow name="Date" w={25} chev icon={<Calendar />} />
            <FieldRow name="MonthName" w={67.500} />
            <FieldRow name="Quarter" w={41} />
            <FieldRow name="Year" w={22.500} />
          </div>
          <FieldHead name="Locations" w={50} icon={<Table />} />
          <FieldHead name="Manufacturers" w={76} open icon={<Table />} />
          <div className="pb-[1px] pt-[6px]">
            <FieldRow name="Manufacturer" w={72} />
          </div>
          <FieldHead name="Products" w={47} open icon={<Table />} />
        </div>
        <div className="mt-[1px] h-[688px] w-[6px] rounded-t-[3px] rounded-b-[3px] bg-[#d2d1ce]" />
      </div>
    </div>
  );
}

const Tab = ({ t, w, cls }) => (
  <div className={"flex items-center justify-center border-r border-[#c8c6c4] " + cls}><T w={w}>{t}</T></div>
);

function PageTabs() {
  return (
    <div className="flex h-[35px] bg-[#f3f2f1] text-[12px] font-semibold text-[#605e5c]">
      <div className="flex w-[40px] items-center border-r border-[#a19f9d] pl-[6px]">
        <Svg w={5} h={8}><path d="M4.500 0v8L.5 4z" fill="#c8c6c4" /></Svg>
        <Svg w={5} h={8} className="ml-[16px]"><path d="M.5 0v8l4-4z" fill="#c8c6c4" /></Svg>
      </div>
      <Tab t="Sales and Units" w={83} cls="w-[124px]" />
      <Tab t="Podział Sprzedaży" w={98} cls="w-[139px]" />
      <Tab t="Strona 1" w={44} cls="w-[84px]" />
      <div className="flex w-[114px] items-center justify-center border-b-2 border-[#f2c811] bg-white pt-[2px]"><T w={72}>Trend Roczny</T></div>
      <div className="mt-[2px] flex h-[32px] w-[39px] items-center justify-center bg-[#f2c811]">
        <Svg w={11}><path d="M5.500 0v11M0 5.500h11" stroke="#797775" strokeWidth="3" /></Svg>
      </div>
    </div>
  );
}

/* ---------- taskbar ---------- */
const Edge = () => (
  <Svg w={24}>
    <defs>
      <linearGradient id="e1" x1="0" y1="0" x2="1" y2=".4"><stop offset="0" stopColor="#2fb8e8" /><stop offset=".6" stopColor="#37c8b8" /><stop offset="1" stopColor="#5be04e" /></linearGradient>
      <linearGradient id="e2" x1="0" y1="0" x2="1" y2="1"><stop offset="0" stopColor="#1b8fe0" /><stop offset="1" stopColor="#0c59a4" /></linearGradient>
    </defs>
    <circle cx="12" cy="12" r="12" fill="url(#e2)" />
    <path d="M.3 10Q2.500 0 12.500 0 24 1 24 10q0 6-6 6-5 0-4.500-3 1.500-2 0-4.500Q11 5.500 7 6 2 7 .3 10z" fill="url(#e1)" />
    <path d="M8.500 12.500q-1 6 4 8 4.500 1.500 9-1-4 5.500-11 4.300Q3 20 4.500 12.500 6 8 10.500 8q-2 2-2 4.500z" fill="#0d4a8c" opacity=".75" />
    <path d="M14.500 12.500q-1.500 3.500 3.500 3.800 3.500 0 5-1.800-.5 2.500-1.500 4-6 3-9.500-.5-2.500-3 .5-8 2.500 0 2 2.500z" fill="#1f1f1f" />
  </Svg>
);
const Folder = () => (
  <Svg w={22} h={18}>
    <path d="M0 0h9l2 2v3H0z" fill="#e8a200" />
    <path d="M0 3h9l2-2h11v16H0z" fill="#ffd866" />
    <path d="M4 10h14v8h-4v-4H8v4H4z" fill="#3a92d8" />
  </Svg>
);
const Store = () => (
  <Svg w={23} h={24}>
    <path d="M6 7V1h11v6" stroke="#e8e8e8" strokeWidth="1.500" />
    <path d="M0 6h23v17q0 1-1 1H1q-1 0-1-1z" fill="#f4f4f4" />
    <path d="M7 11h4v4H7z" fill="#f25022" /><path d="M12 11h4v4h-4z" fill="#7fba00" /><path d="M7 16h4v4H7z" fill="#00a4ef" /><path d="M12 16h4v4h-4z" fill="#ffb900" />
  </Svg>
);
const Mail = () => (
  <Svg w={24} h={22}>
    <path d="M0 7.500 12 0l12 7.500V12H0z" fill="#0f5ba8" />
    <path d="M2 7.500h20L12 15z" fill="#f0f0f0" />
    <path d="M0 7.500 12 15.500 24 7.500V22H0z" fill="#2ba9ea" />
    <path d="M0 22 12 14l12 8z" fill="#41c4f5" opacity=".7" />
  </Svg>
);
const Firefox = () => (
  <Svg w={24}>
    <defs><linearGradient id="f1" x1="1" y1="0" x2=".2" y2="1"><stop offset="0" stopColor="#ffe64a" /><stop offset=".45" stopColor="#ff8a1e" /><stop offset="1" stopColor="#f0246a" /></linearGradient></defs>
    <path d="M15 0q4 3 4.500 5.500Q21.500 6 22 4q3 6 1 12-3 7.500-11 7.500T1 16Q-.5 10 3 5q0 1.500 1 2Q6 3 8.500 4q1 2 3.500 1.500 0-3 3-5.500z" fill="url(#f1)" />
    <circle cx="12" cy="12.500" r="5" fill="#7a3ee0" />
    <path d="M5 8q4-1.500 7 1-3 0-3.500 2.500-.5 3 3.500 3.500 3.500 0 5-2-1 5.500-6 5.500Q4 17.500 5 8z" fill="#ff7a2a" />
  </Svg>
);
const Drop = () => (
  <Svg w={18} h={24}>
    <defs><clipPath id="d1"><path d="M10 0q1 4 4 7.500T18 15q0 9-9 9T0 15q0-4 4-7.500T10 0z" /></clipPath></defs>
    <g clipPath="url(#d1)">
      <path d="M0 0h18v24H0z" fill="#2a9df0" />
      <path d="M0 0h18v8q-8 1-11 5t-7 3z" fill="#ee4a78" />
      <path d="M0 15q5 0 8-3.500t10-3.500v5q-6 0-9 3t-9 2.500z" fill="#8a4bb8" />
      <path d="M8 0h4l3 6.500q-4 1-5.500-2z" fill="#ffc400" />
      <path d="M0 18q7 1 10 6H0z" fill="#35d0f5" />
    </g>
  </Svg>
);
const Chrome = () => (
  <Svg w={23} h={23} vb="0 0 24 24">
    <circle cx="12" cy="12" r="12" fill="#fcc934" />
    <path d="M12 12 1.600 6A12 12 0 0 1 22.400 6H12z" fill="#d9483b" />
    <path d="M1.600 6A12 12 0 0 0 11 24l5.500-9.500L7 15z" fill="#2a9d57" />
    <circle cx="12" cy="12" r="5.600" fill="#fff" /><circle cx="12" cy="12" r="4.500" fill="#4a86f0" />
  </Svg>
);
const PBI = () => (
  <Svg w={24}>
    <path d="M0 0h24v24H0z" fill="#f2c811" />
    <path d="M6 17.500q-2 0-2-2v-7q0-2 2-2h12q2 0 2 2v7q0 2-2 2" stroke="#252423" strokeWidth="1.200" />
    <path d="M8 18v-3M11 18v-5.500M14 18v-4M17 18V9" stroke="#252423" strokeWidth="2" />
  </Svg>
);

function TaskApp({ w, on, active, children }) {
  return (
    <div className={"flex h-10 shrink-0 flex-col items-center " + w + (active ? " bg-[#4b4b4b]" : "")}>
      <div className="flex h-[38px] items-center pt-[2px]">{children}</div>
      {on && <div className={"h-[2px] bg-[#76b9ed] " + (active ? "w-12" : "w-10")} />}
    </div>
  );
}

function Taskbar() {
  return (
    <div className="flex h-10 shrink-0 items-center bg-[#202020] text-white">
      <div className="flex w-12 justify-center">
        <Svg w={16}><path d="M0 2.300 6.500 1.300v6.200H0zM7.500 1.200 16 0v7.500H7.500zM0 8.500h6.500v6.200L0 13.700zM7.500 8.500H16V16l-8.500-1.200z" fill="#fff" /></Svg>
      </div>
      <div className="flex h-10 w-[344px] items-center gap-[11px] border border-[#c0c0c0] bg-[#f2f2f2] pl-3 text-[15px] text-[#2b2b2b]">
        <Search s={17} c="#111" />
        <T w={188} className="mt-px">Wpisz tu wyszukiwane słowa</T>
      </div>
      <TaskApp w="w-[48px]"><Svg w={16}><circle cx="8" cy="8" r="6.700" stroke="#fff" strokeWidth="2" /></Svg></TaskApp>
      <TaskApp w="w-[48px]">
        <Svg w={17} h={16} className="mt-[-2px]"><path d="M.5 0v2.500h10V0M.5 5h10v6H.5zM.5 16v-2.500h10V16M14.500 0v3.500M14.500 9v7" stroke="#fff" strokeWidth="1.200" /><path d="M13 4.500h3V8h-3z" fill="#fff" /></Svg>
      </TaskApp>
      <TaskApp w="w-[52px]"><Edge /></TaskApp>
      <TaskApp w="w-[48px]" on><Folder /></TaskApp>
      <TaskApp w="w-[49px]"><Store /></TaskApp>
      <TaskApp w="w-[49px]"><Mail /></TaskApp>
      <TaskApp w="w-[49px]"><Firefox /></TaskApp>
      <TaskApp w="w-[50px]" on><Drop /></TaskApp>
      <TaskApp w="w-[49px]" on><Chrome /></TaskApp>
      <TaskApp w="w-[48px]" on active><PBI /></TaskApp>
      <div className="ml-auto flex items-center text-[15px]">
        <Svg w={22} h={15}>
          <defs><linearGradient id="c1" x1="0" y1="0" x2="1" y2="1"><stop offset="0" stopColor="#e8f4fd" /><stop offset="1" stopColor="#8cc6ee" /></linearGradient></defs>
          <path d="M5 15a4.800 4.800 0 0 1-.5-9.500Q6 0 11 0t6.500 5.500A4.800 4.800 0 0 1 17.500 15z" fill="url(#c1)" />
        </Svg>
        <T w={21} className="ml-[9px]">6°C</T>
        <T w={73} className="ml-[9px]">Pochmurnie</T>
        <Svg w={12} h={7} className="ml-[17px]"><path d="M.5 6.500 6 1l5.500 5.500" stroke="#fff" strokeWidth="1.300" /></Svg>
        <Svg w={17} h={16} className="ml-[10px]">
          <path d="M.5 2.500 15.500.8v7M.5 2.500v10.500L9 14M4 6.500q2-3 5-1.500l2-1.500M4.500 10.500q3 1 5-1.500" stroke="#fff" strokeWidth="1.200" />
          <circle cx="12.500" cy="12" r="3.800" fill="#ff9500" />
        </Svg>
        <Svg w={16} h={14} className="ml-[7px]"><path d="M4.500 2.500h11v8h-11zM8 13.500h5M10 10.500v3M.5.500h3v4h-3zM2 4.500v5h3" stroke="#fff" /></Svg>
        <Svg w={17} h={15} className="ml-2">
          <path d="M.5 5h2.500L6.500 1v12L3 9.500H.5z" stroke="#fff" />
          <circle cx="12" cy="9.500" r="4.500" fill="#e81123" /><path d="M10.300 7.800l3.400 3.400M13.700 7.800l-3.400 3.400" stroke="#fff" strokeWidth="1.200" />
        </Svg>
        <div className="ml-[9px] mt-[-2px] flex w-[54px] flex-col items-center text-[12px] leading-[17px]">
          <T w={26}>19:09</T>
          <T w={53}>18.11.2021</T>
        </div>
        <Svg w={26} h={26} className="ml-[18px] mt-[3px]">
          <path d="M0 1h16v12h-8l-3.500 4v-4H0z" fill="#fff" /><path d="M3 4.500h10M3 7h10M3 9.500h7" stroke="#202020" />
          <circle cx="15.500" cy="16.500" r="8" fill="#3a3a3a" stroke="#9a9a9a" />
          <text x="15.500" y="20.800" fontSize="11.500" fontWeight="600" fill="#fff" textAnchor="middle">2</text>
        </Svg>
        <div className="ml-[10px] mr-1 h-10 w-px bg-[#6a6a6a]" />
      </div>
    </div>
  );
}

export default function App() {
  return (
    <div className="flex h-[1080px] w-[1920px] flex-col overflow-hidden bg-[#f3f2f1] font-['Open_Sans','Noto_Sans',sans-serif]">
      <TitleBar />
      <Ribbon />
      <div className="flex h-[854px] shrink-0">
        <Rail />
        <div className="flex w-[1490px] shrink-0 flex-col">
          <div className="flex h-[819px] overflow-hidden">
            <div className="w-[1289px] shrink-0 overflow-hidden"><Canvas /></div>
            <Filters />
          </div>
          <PageTabs />
        </div>
        <Visualizations />
        <Fields />
      </div>
      <div className="flex h-6 shrink-0 items-center justify-between border-t border-[#d8d6d4] px-[5px] text-[12px] text-[#484644]">
        <T w={63}>Strona 4 z 4</T>
        <T w={243}>Jest dostępna aktualizacja (kliknij, aby pobrać)</T>
      </div>
      <Taskbar />
    </div>
  );
}
